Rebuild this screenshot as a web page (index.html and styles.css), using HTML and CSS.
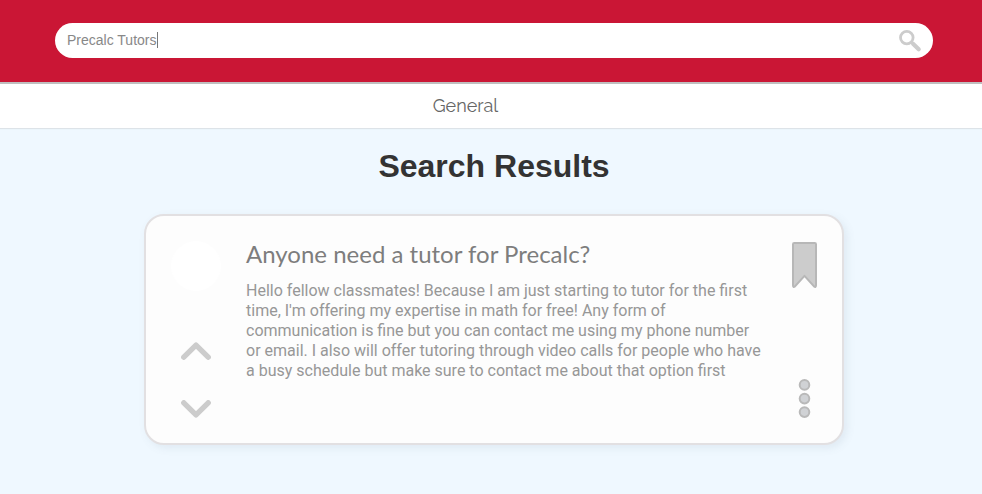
FILE: index.html
```html
<!DOCTYPE html>
<html lang="en">
<head>
<meta charset="utf-8">
<title>Search Results</title>
<link rel="stylesheet" href="styles.css">
</head>
<body>
<header class="top">
  <div class="search">
    <span class="query">Precalc Tutors</span><span class="caret"></span>
    <svg class="lens" width="24" height="24" viewBox="0 0 24 24" fill="none" stroke="#ccc">
      <circle cx="8.8" cy="8.6" r="6.3" stroke-width="2.8"/>
      <path d="M13.2 12.8l1.8 1.8" stroke-width="2.5"/>
      <path d="M15 14.7l5.7 5.5" stroke-width="4.2" stroke-linecap="round"/>
    </svg>
  </div>
</header>
<nav class="tabs"><span class="tab">General</span></nav>
<main class="results">
  <h1 class="heading">Search Results</h1>
  <article class="card">
    <div class="votes">
      <div class="avatar"></div>
      <svg class="up" width="30" height="18" viewBox="0 0 30 18"><path d="M2.8 15.2L15 3.2l12.2 12"/></svg>
      <svg class="down" width="30" height="18" viewBox="0 0 30 18"><path d="M2.8 2.8L15 14.8l12.2-12"/></svg>
    </div>
    <div class="post">
      <h2 class="title">Anyone need a tutor for Precalc?</h2>
      <p class="text">Hello fellow classmates! Because I am just starting to tutor for the first<br>time, I'm offering my expertise in math for free! Any form of<br>communication is fine but you can contact me using my phone number<br>or email. I also will offer tutoring through video calls for people who have<br>a busy schedule but make sure to contact me about that option first</p>
    </div>
    <div class="actions">
      <svg width="25" height="46" viewBox="0 0 25 46"><path d="M2.2 1h20.6q1.2 0 1.2 1.2v41q0 2.6-2 1.2L12.5 33.8 3 44.4q-2 1.4-2-1.2v-41Q1 1 2.2 1z" fill="#ccc" stroke="#b7b7b7" stroke-width="2" stroke-linejoin="round"/></svg>
      <svg width="13" height="39" viewBox="0 0 13 39" fill="#d0d2d5" stroke="#b9b9b9" stroke-width="2"><circle cx="6.5" cy="5.9" r="4.8"/><circle cx="6.5" cy="19.6" r="4.8"/><circle cx="6.5" cy="33.1" r="4.8"/></svg>
    </div>
  </article>
</main>
</body>
</html>
```
FILE: styles.css
```css
* { box-sizing: border-box; }
body { margin: 0; min-height: 494px; background: #eff8ff; font-family: "Liberation Sans", Arial, sans-serif; overflow: hidden; }
.top { height: 84px; padding: 23px 49px 0 55px; background: #ca1635; border-bottom: 2px solid #bfbfbf; }
.search { display: flex; align-items: center; height: 35px; padding: 0 11px 0 12px; border-radius: 18px; background: #fff; }
.query { padding-bottom: 2px; font-size: 14px; line-height: 16px; color: #888; }
.caret { width: 1px; height: 16px; margin: 0 0 1px 1px; background: #777; }
.lens { margin-left: auto; }
.tabs { display: flex; justify-content: center; height: 44px; padding-right: 51px; background: #fff; box-shadow: 0 1px 1px #dde3e8; }
.tab { font: 18px/43px Raleway, Lato, sans-serif; color: #666; }
.results { padding: 20px 138px 0 144px; }
.heading { margin: 0; font-size: 32px; line-height: 36px; text-align: center; color: #333; }
.card { display: flex; width: 700px; height: 231px; margin-top: 30px; padding: 25px; border: 2px solid #e2e0e2; border-radius: 20px; background: #fdfdfd; box-shadow: 3px 3px 8px rgba(90, 110, 130, 0.1); }
.votes { display: flex; flex-direction: column; align-items: center; width: 50px; }
.votes path { fill: none; stroke: #ccc; stroke-width: 5.4; stroke-linecap: round; stroke-linejoin: round; }
.avatar { width: 50px; height: 50px; border-radius: 50%; background: #fff; }
.up { margin-top: 51px; }
.down { margin-top: 40px; }
.post { width: 530px; margin-left: 25px; }
.title { margin: 0; font: 24px/26px Lato, sans-serif; color: #7d7d7d; white-space: nowrap; }
.text { margin: 14px 0 0; font: 16px/20px Roboto, sans-serif; color: #979797; white-space: nowrap; }
.actions { display: flex; flex-direction: column; align-items: center; justify-content: space-between; width: 25px; margin: 1px 0 0 16px; }
```
